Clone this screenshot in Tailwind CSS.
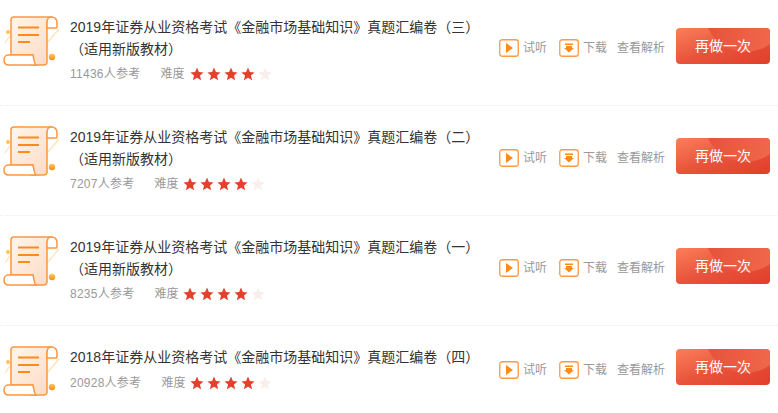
<!DOCTYPE html>
<html lang="zh-CN">
<head>
  <meta charset="UTF-8" />
  <title>真题汇编卷</title>
  <script src="https://cdn.jsdelivr.net/npm/@tailwindcss/browser@4"></script>
</head>
<body class="bg-white font-['Liberation_Sans','Noto_Sans_CJK_SC',sans-serif] overflow-hidden h-[413px]">
  <!-- shared icons -->
  <svg width="0" height="0" class="absolute">
    <defs>
      <linearGradient id="paper" x1="0" y1="0" x2="1" y2="1">
        <stop offset="0" stop-color="#fff6ec" />
        <stop offset="1" stop-color="#ffd9c2" />
      </linearGradient>
      <linearGradient id="ball" x1="0" y1="0" x2="0" y2="1">
        <stop offset="0" stop-color="#ffc95c" />
        <stop offset="1" stop-color="#fb8a1e" />
      </linearGradient>
      <symbol id="scroll" viewBox="0 0 60 52">
        <path d="M5 27 L12 17 M47 27 L59 13" stroke="#ffe3b0" stroke-width="1.2" fill="none" />
        <circle cx="8" cy="16" r="2" fill="#ffc35a" />
        <path d="M11 4 Q11 1 14 1 H52 C48 2 47 5 47 9 V46 C47 48 45 49 43 49 H31 C34 47 34 44 33 39 H11 Z" fill="url(#paper)" stroke="#fd9640" stroke-width="1.5" stroke-linejoin="round" />
        <path d="M51 1 C55 1 57 3 57 7 V11 Q57 12 56 12 H47 V7 C47 3 48 1 51 1 Z" fill="#fff" stroke="#fd9640" stroke-width="1.5" />
        <path d="M8 39 H33 C34 43 34 47 36 49 H9 C6 49 4 47 4 44 C4 41 6 39 8 39 Z" fill="#fff" stroke="#fd9640" stroke-width="1.5" stroke-linejoin="round" />
        <path d="M18 11.5 H39 M18 19 H39 M18 26 H30" stroke="#fb8c1a" stroke-width="2" fill="none" />
        <circle cx="52" cy="41" r="3.2" fill="url(#ball)" />
      </symbol>
      <symbol id="play" viewBox="0 0 20 18">
        <rect x="0.75" y="0.75" width="18.5" height="16.5" rx="2.5" fill="none" stroke="#fd9a45" stroke-width="1.3" />
        <path d="M7 4 L14 9 L7 14 Z" fill="#fb8c1a" />
      </symbol>
      <symbol id="down" viewBox="0 0 20 18">
        <rect x="0.75" y="0.75" width="18.5" height="16.5" rx="2.5" fill="none" stroke="#fd9a45" stroke-width="1.3" />
        <path d="M6 4.5 H14 V6 H6 Z M7 7 H13 V9 H15 L10 13.5 L5 9 H7 Z" fill="#fb8c1a" />
      </symbol>
      <symbol id="star" viewBox="0 0 14 14">
        <path d="M7 .6 L8.9 5 L13.6 5.4 L10 8.5 L11.1 13.2 L7 10.7 L2.9 13.2 L4 8.5 L.4 5.4 L5.1 5 Z" />
      </symbol>
    </defs>
  </svg>

  <ul class="-mt-1">
    <li class="h-[110px] border-b border-dotted border-[#eeeeee] pt-5 flex items-start">
      <svg class="w-[60px] h-[52px] shrink-0"><use href="#scroll" /></svg>
      <div class="flex items-center flex-1 min-w-0">
        <div class="ml-2.5 w-[419px] shrink-0">
          <h3 class="text-sm leading-[22px] text-[#333333]">2019年证券从业资格考试《金融市场基础知识》真题汇编卷（三）（适用新版教材）</h3>
          <div class="flex items-center h-5 mt-1 text-xs text-[#999999]">
            <span class="mr-5 tracking-[0.25px]">11436人参考</span>
            <span class="mr-[5px]">难度</span>
            <span class="flex gap-[3px] text-[#e5402e]">
              <svg class="w-3.5 h-3.5 fill-current"><use href="#star" /></svg>
              <svg class="w-3.5 h-3.5 fill-current"><use href="#star" /></svg>
              <svg class="w-3.5 h-3.5 fill-current"><use href="#star" /></svg>
              <svg class="w-3.5 h-3.5 fill-current"><use href="#star" /></svg>
              <svg class="w-3.5 h-3.5 fill-[#f8eeeb]"><use href="#star" /></svg>
            </span>
          </div>
        </div>
        <div class="flex items-center text-xs text-[#999999] ml-2.5 w-[177px] shrink-0 -mt-1">
          <svg class="w-5 h-[18px] mr-1"><use href="#play" /></svg><span class="mr-3">试听</span>
          <svg class="w-5 h-[18px] mr-1"><use href="#down" /></svg><span class="mr-2.5">下载</span>
          <span>查看解析</span>
        </div>
        <button class="relative overflow-hidden w-[94px] h-9 -mt-2 rounded bg-gradient-to-br from-[#fb7f58] via-[#e8533c] to-[#e13e2a] text-sm text-white shrink-0">
          <span class="absolute left-[28px] -top-[59px] w-[83px] h-[83px] rounded-full bg-gradient-to-r from-[#e6513a] to-[#f26d50]"></span>
          <span class="relative">再做一次</span>
        </button>
      </div>
    </li>
    <li class="h-[110px] border-b border-dotted border-[#eeeeee] pt-5 flex items-start">
      <svg class="w-[60px] h-[52px] shrink-0"><use href="#scroll" /></svg>
      <div class="flex items-center flex-1 min-w-0">
        <div class="ml-2.5 w-[419px] shrink-0">
          <h3 class="text-sm leading-[22px] text-[#333333]">2019年证券从业资格考试《金融市场基础知识》真题汇编卷（二）（适用新版教材）</h3>
          <div class="flex items-center h-5 mt-1 text-xs text-[#999999]">
            <span class="mr-5 tracking-[0.25px]">7207人参考</span>
            <span class="mr-[5px]">难度</span>
            <span class="flex gap-[3px] text-[#e5402e]">
              <svg class="w-3.5 h-3.5 fill-current"><use href="#star" /></svg>
              <svg class="w-3.5 h-3.5 fill-current"><use href="#star" /></svg>
              <svg class="w-3.5 h-3.5 fill-current"><use href="#star" /></svg>
              <svg class="w-3.5 h-3.5 fill-current"><use href="#star" /></svg>
              <svg class="w-3.5 h-3.5 fill-[#f8eeeb]"><use href="#star" /></svg>
            </span>
          </div>
        </div>
        <div class="flex items-center text-xs text-[#999999] ml-2.5 w-[177px] shrink-0 -mt-1">
          <svg class="w-5 h-[18px] mr-1"><use href="#play" /></svg><span class="mr-3">试听</span>
          <svg class="w-5 h-[18px] mr-1"><use href="#down" /></svg><span class="mr-2.5">下载</span>
          <span>查看解析</span>
        </div>
        <button class="relative overflow-hidden w-[94px] h-9 -mt-2 rounded bg-gradient-to-br from-[#fb7f58] via-[#e8533c] to-[#e13e2a] text-sm text-white shrink-0">
          <span class="absolute left-[28px] -top-[59px] w-[83px] h-[83px] rounded-full bg-gradient-to-r from-[#e6513a] to-[#f26d50]"></span>
          <span class="relative">再做一次</span>
        </button>
      </div>
    </li>
    <li class="h-[110px] border-b border-dotted border-[#eeeeee] pt-5 flex items-start">
      <svg class="w-[60px] h-[52px] shrink-0"><use href="#scroll" /></svg>
      <div class="flex items-center flex-1 min-w-0">
        <div class="ml-2.5 w-[419px] shrink-0">
          <h3 class="text-sm leading-[22px] text-[#333333]">2019年证券从业资格考试《金融市场基础知识》真题汇编卷（一）（适用新版教材）</h3>
          <div class="flex items-center h-5 mt-1 text-xs text-[#999999]">
            <span class="mr-5 tracking-[0.25px]">8235人参考</span>
            <span class="mr-[5px]">难度</span>
            <span class="flex gap-[3px] text-[#e5402e]">
              <svg class="w-3.5 h-3.5 fill-current"><use href="#star" /></svg>
              <svg class="w-3.5 h-3.5 fill-current"><use href="#star" /></svg>
              <svg class="w-3.5 h-3.5 fill-current"><use href="#star" /></svg>
              <svg class="w-3.5 h-3.5 fill-current"><use href="#star" /></svg>
              <svg class="w-3.5 h-3.5 fill-[#f8eeeb]"><use href="#star" /></svg>
            </span>
          </div>
        </div>
        <div class="flex items-center text-xs text-[#999999] ml-2.5 w-[177px] shrink-0 -mt-1">
          <svg class="w-5 h-[18px] mr-1"><use href="#play" /></svg><span class="mr-3">试听</span>
          <svg class="w-5 h-[18px] mr-1"><use href="#down" /></svg><span class="mr-2.5">下载</span>
          <span>查看解析</span>
        </div>
        <button class="relative overflow-hidden w-[94px] h-9 -mt-2 rounded bg-gradient-to-br from-[#fb7f58] via-[#e8533c] to-[#e13e2a] text-sm text-white shrink-0">
          <span class="absolute left-[28px] -top-[59px] w-[83px] h-[83px] rounded-full bg-gradient-to-r from-[#e6513a] to-[#f26d50]"></span>
          <span class="relative">再做一次</span>
        </button>
      </div>
    </li>
    <li class="h-[91px] pt-5 flex items-start">
      <svg class="w-[60px] h-[52px] shrink-0"><use href="#scroll" /></svg>
      <div class="flex items-center flex-1 min-w-0">
        <div class="ml-2.5 w-[419px] shrink-0">
          <h3 class="text-sm leading-[22px] text-[#333333]">2018年证券从业资格考试《金融市场基础知识》真题汇编卷（四）</h3>
          <div class="flex items-center h-5 mt-[5px] text-xs text-[#999999]">
            <span class="mr-5 tracking-[0.25px]">20928人参考</span>
            <span class="mr-[5px]">难度</span>
            <span class="flex gap-[3px] text-[#e5402e]">
              <svg class="w-3.5 h-3.5 fill-current"><use href="#star" /></svg>
              <svg class="w-3.5 h-3.5 fill-current"><use href="#star" /></svg>
              <svg class="w-3.5 h-3.5 fill-current"><use href="#star" /></svg>
              <svg class="w-3.5 h-3.5 fill-current"><use href="#star" /></svg>
              <svg class="w-3.5 h-3.5 fill-[#f8eeeb]"><use href="#star" /></svg>
            </span>
          </div>
        </div>
        <div class="flex items-center text-xs text-[#999999] ml-2.5 w-[177px] shrink-0">
          <svg class="w-5 h-[18px] mr-1"><use href="#play" /></svg><span class="mr-3">试听</span>
          <svg class="w-5 h-[18px] mr-1"><use href="#down" /></svg><span class="mr-2.5">下载</span>
          <span>查看解析</span>
        </div>
        <button class="relative overflow-hidden w-[94px] h-9 -mt-1.5 rounded bg-gradient-to-br from-[#fb7f58] via-[#e8533c] to-[#e13e2a] text-sm text-white shrink-0">
          <span class="absolute left-[28px] -top-[59px] w-[83px] h-[83px] rounded-full bg-gradient-to-r from-[#e6513a] to-[#f26d50]"></span>
          <span class="relative">再做一次</span>
        </button>
      </div>
    </li>
  </ul>
</body>
</html>
